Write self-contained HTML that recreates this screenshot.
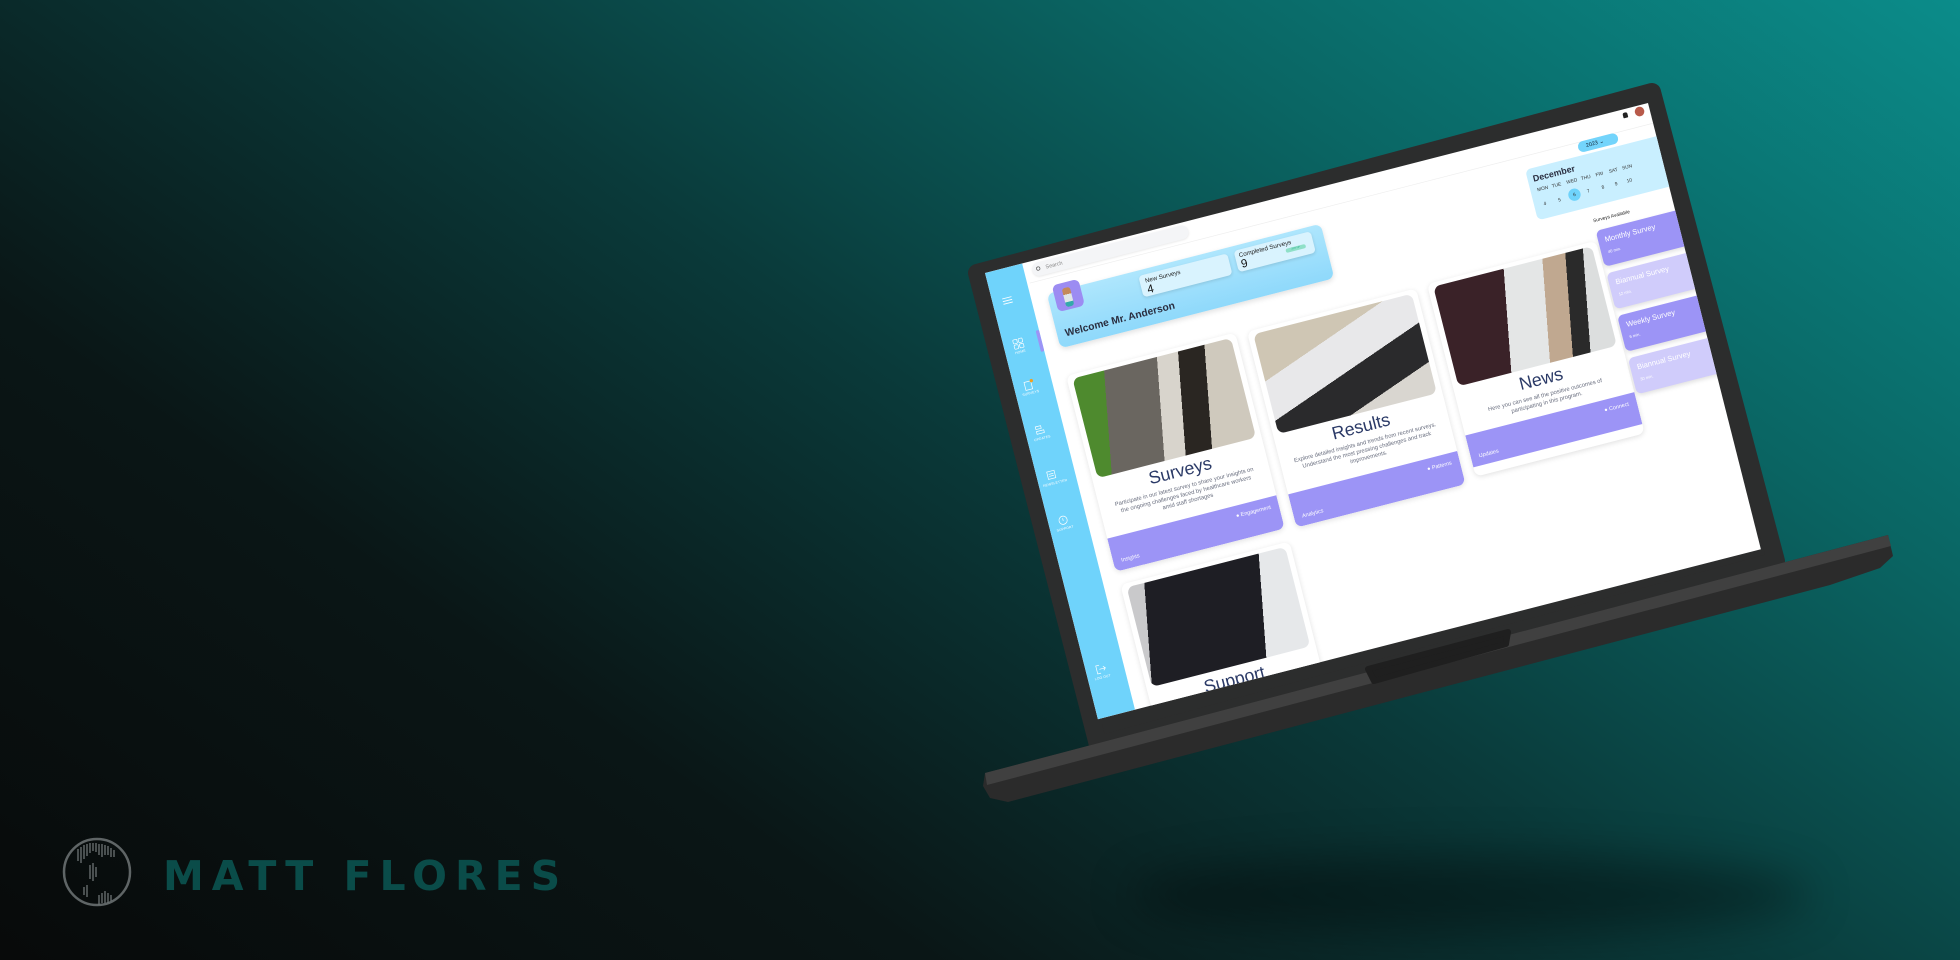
<!DOCTYPE html>
<html><head><meta charset="utf-8"><style>
*{margin:0;padding:0;box-sizing:border-box}
body{width:1960px;height:960px;overflow:hidden;position:relative;font-family:"Liberation Sans",sans-serif;
background:linear-gradient(35deg,#080a0a 0%,#0a1616 28%,#0a3a3a 52%,#0a6563 75%,#0b8c8a 100%);}
.abs{position:absolute}
#screen{position:absolute;left:0;top:0;width:1000px;height:672px;transform-origin:0 0;transform:matrix(0.663,-0.170,0.168,0.664,985,273);background:#fff;overflow:hidden}
.side{position:absolute;left:0;top:0;width:56px;height:672px;background:#6fd3fb}
.ico{position:absolute;left:6px;width:32px;text-align:center;color:#fff;font-size:5px;letter-spacing:.2px}
.ico svg{display:block;margin:0 auto 2px}
.card{position:absolute;width:255px;height:295px;background:#fff;border-radius:10px;box-shadow:0 2px 8px rgba(0,0,0,.12);overflow:hidden}
.ph{position:absolute;left:8px;top:6px;right:8px;height:150px;border-radius:10px}
.ct{position:absolute;left:0;right:0;top:160px;text-align:center;color:#2b3a67;font-size:26px}
.cd{position:absolute;left:20px;right:20px;top:194px;text-align:center;color:#6b7080;font-size:8.5px;line-height:11px}
.cf{position:absolute;left:0;right:0;bottom:0;height:50px;background:#9c94f6;color:#fff;font-size:8px}
.cf .l{position:absolute;left:12px;bottom:10px}
.cf .r{position:absolute;right:12px;top:10px}
.sv{position:absolute;left:880px;width:130px;height:54px;border-radius:8px;color:#fff;box-shadow:0 3px 6px rgba(0,0,0,.12)}
.sv b{position:absolute;left:10px;top:10px;font-size:11px;font-weight:normal}
.sv i{position:absolute;left:10px;top:32px;font-size:6px;font-style:normal}
.cal span{position:absolute;font-size:7px;color:#333}
</style></head><body>

<div class="abs" style="left:1130px;top:855px;width:680px;height:80px;border-radius:50%;background:rgba(0,0,0,.35);filter:blur(22px)"></div>

<svg class="abs" style="left:0;top:0" width="1960" height="960">
<polygon points="977,273 1652,92 1776,561 1098,745" fill="#2c2d2d" stroke="#2c2d2d" stroke-width="18" stroke-linejoin="round"/>
</svg>

<div id="screen">
 <div class="side">
  <div class="ico" style="top:40px"><svg width="16" height="14"><path d="M1 3h14M1 7h14M1 11h14" stroke="#fff" stroke-width="1.3"/></svg></div>
  <div class="ico" style="top:104px"><svg width="16" height="16"><rect x="1" y="1" width="6" height="6" rx="1.5" fill="none" stroke="#fff"/><rect x="9" y="1" width="6" height="6" rx="1.5" fill="none" stroke="#fff"/><rect x="1" y="9" width="6" height="6" rx="1.5" fill="none" stroke="#fff"/><rect x="9" y="9" width="6" height="6" rx="1.5" fill="none" stroke="#fff"/></svg>HOME</div>
  <div class="ico" style="top:166px"><svg width="16" height="16"><rect x="2" y="3" width="10" height="12" fill="none" stroke="#fff"/><circle cx="13" cy="3" r="2.5" fill="#f0a020"/></svg>SURVEYS</div>
  <div class="ico" style="top:234px"><svg width="16" height="16"><path d="M2 2h8v4H2zM2 9h11v4H2z" fill="none" stroke="#fff"/></svg>UPDATES</div>
  <div class="ico" style="top:302px"><svg width="16" height="16"><rect x="2" y="2" width="11" height="11" fill="none" stroke="#fff"/><path d="M4 6h7M4 9h7" stroke="#fff"/></svg>NEWSLETTER</div>
  <div class="ico" style="top:370px"><svg width="16" height="16"><circle cx="8" cy="8" r="6" fill="none" stroke="#fff"/><path d="M8 5v4" stroke="#fff"/></svg>SUPPORT</div>
  <div class="ico" style="top:594px"><svg width="16" height="16"><path d="M7 2H2v12h5M6 8h9M12 5l3 3-3 3" fill="none" stroke="#fff"/></svg>LOG OUT</div>
 </div>
 <div class="abs" style="left:51px;top:100px;width:5px;height:32px;background:#9c94f6;border-radius:2px"></div>
 <div class="abs" style="left:68px;top:4px;width:235px;height:20px;border-radius:10px;background:#f4f5f7;box-shadow:0 1px 3px rgba(0,0,0,.1);font-size:8px;color:#888;padding:5px 0 0 20px">Search</div>
 <div class="abs" style="left:74px;top:10px;width:6px;height:6px;border:1px solid #555;border-radius:50%"></div>
 <div class="abs" style="left:60px;top:30px;width:940px;height:1px;background:#eee"></div>
 <div class="abs" style="left:960px;top:5px;width:7px;height:8px;background:#222;border-radius:3px 3px 1px 1px"></div>
 <div class="abs" style="left:978px;top:2px;width:14px;height:14px;border-radius:50%;background:#b85a4a"></div>

 <div class="abs" style="left:80px;top:52px;width:413px;height:82px;border-radius:10px;background:linear-gradient(180deg,#aee6fd,#8fd9fb);box-shadow:0 3px 8px rgba(0,0,0,.12)"></div>
 <div class="abs" style="left:90px;top:42px;width:40px;height:40px;border-radius:8px;background:#9c8cf2"></div>
 <div class="abs" style="left:103px;top:50px;width:12px;height:28px;background:linear-gradient(#c48a5a 0 35%,#dfe6e6 35% 75%,#3aa 75%);border-radius:4px"></div>
 <div class="abs" style="left:92px;top:106px;font-size:15px;font-weight:bold;color:#2a2e40">Welcome Mr. Anderson</div>
 <div class="abs" style="left:216px;top:60px;width:134px;height:32px;border-radius:6px;background:#d9f3fe;box-shadow:0 2px 5px rgba(0,0,0,.12)">
  <div class="abs" style="left:8px;top:4px;font-size:9px;color:#222">New Surveys</div>
  <div class="abs" style="left:8px;top:13px;font-size:17px;color:#111">4</div></div>
 <div class="abs" style="left:360px;top:59px;width:116px;height:32px;border-radius:6px;background:#d9f3fe;box-shadow:0 2px 5px rgba(0,0,0,.12)">
  <div class="abs" style="left:6px;top:3px;font-size:9px;color:#222">Completed Surveys</div>
  <div class="abs" style="left:6px;top:12px;font-size:17px;color:#111">9</div>
  <div class="abs" style="left:74px;top:16px;width:30px;height:6px;border-radius:3px;background:#8fe0c8;font-size:3.5px;color:#2a8;text-align:center">20% UP</div></div>

 <div class="card" style="left:78px;top:175px">
  <div class="ph" style="background:linear-gradient(100deg,#4e8a2e 0 18%,#6a6660 18% 48%,#d8d4cc 48% 60%,#2a2622 60% 75%,#cfc9bd 75%)"></div>
  <div class="ct">Surveys</div>
  <div class="cd">Participate in our latest survey to share your insights on the ongoing challenges faced by healthcare workers amid staff shortages</div>
  <div class="cf"><span class="r">● Engagement</span><span class="l">Insights</span></div></div>
 <div class="card" style="left:350px;top:178px">
  <div class="ph" style="background:linear-gradient(160deg,#cfc6b4 0 30%,#e8e8ea 30% 55%,#2a2a2c 55% 80%,#d9d6d0 80%)"></div>
  <div class="ct">Results</div>
  <div class="cd">Explore detailed insights and trends from recent surveys. Understand the most pressing challenges and track improvements.</div>
  <div class="cf"><span class="r">● Patterns</span><span class="l">Analytics</span></div></div>
 <div class="card" style="left:622px;top:176px;height:290px">
  <div class="ph" style="background:linear-gradient(100deg,#3a2228 0 40%,#e4e6e6 40% 62%,#c0a890 62% 75%,#2a2a2a 75% 85%,#dcdede 85%)"></div>
  <div class="ct">News</div>
  <div class="cd">Here you can see all the positive outcomes of participating in this program.</div>
  <div class="cf" style="top:228px;bottom:auto;height:48px"><span class="r">● Connect</span><span class="l">Updates</span></div></div>
 <div class="card" style="left:80px;top:490px">
  <div class="ph" style="background:linear-gradient(100deg,#c9c9cb 0 10%,#1e1e24 10% 75%,#e6e8ea 75%)"></div>
  <div class="ct">Support</div></div>

 <div class="abs" style="left:885px;top:30px;width:60px;height:16px;border-radius:8px;background:#73d4fb;font-size:8px;color:#123;padding:3px 0 0 12px">2023 ⌄</div>
 <div class="abs cal" style="left:802px;top:50px;width:210px;height:76px;border-radius:8px;background:#c9efff">
  <div class="abs" style="left:8px;top:8px;font-size:13px;font-weight:bold;color:#2a2e40">December</div>
  <span style="left:10px;top:30px">MON</span><span style="left:32px;top:30px">TUE</span><span style="left:54px;top:30px">WED</span><span style="left:76px;top:30px">THU</span><span style="left:98px;top:30px">FRI</span><span style="left:118px;top:30px">SAT</span><span style="left:138px;top:30px">SUN</span>
  <span style="left:14px;top:52px">4</span><span style="left:36px;top:52px">5</span>
  <div class="abs" style="left:52px;top:44px;width:18px;height:18px;border-radius:50%;background:#6fd3fb"></div>
  <span style="left:59px;top:50px">6</span><span style="left:80px;top:50px">7</span><span style="left:102px;top:50px">8</span><span style="left:122px;top:50px">9</span><span style="left:140px;top:50px">10</span></div>
 <div class="abs" style="left:880px;top:144px;font-size:7px;color:#222">Surveys Available</div>
 <div class="sv" style="top:162px;background:#9c94f6"><b>Monthly Survey</b><i>40 min.</i></div>
 <div class="sv" style="top:226px;background:#d0ccfb"><b>Biannual Survey</b><i>12 min.</i></div>
 <div class="sv" style="top:290px;background:#9c94f6"><b>Weekly Survey</b><i>6 min.</i></div>
 <div class="sv" style="top:354px;background:#d0ccfb"><b>Biannual Survey</b><i>30 min.</i></div>
</div>

<svg class="abs" style="left:0;top:0" width="1960" height="960">
<polygon points="985,773 1888,535 1893,556 1880,568 1830,585 1008,802 990,798 983,786" fill="#2b2b2b"/>
<polygon points="985,773 1888,535 1891,546 987,785" fill="#404040"/>
<polygon points="1368,669 1508,632 1506,644 1374,681" fill="#1f1f1f" stroke="#1f1f1f" stroke-width="6" stroke-linejoin="round"/>
</svg>

<svg class="abs" style="left:60px;top:835px" width="76" height="76">
<circle cx="37" cy="37" r="33" fill="none" stroke="#5f6566" stroke-width="2.5"/>
<g stroke="#6d7374" stroke-width="1.3">
<path d="M18 14v12M21 12v16M24 10v14M27 9v12M30 8v10M33 8v8M36 8v9M39 9v11M42 9v13M45 10v10M48 11v9M51 13v9M54 15v7"/>
<path d="M30 30v14M33 28v18M36 32v10M27 50v12M24 52v8M42 58v10M45 56v12M48 58v10M51 60v6M39 60v10"/>
</g></svg>
<div class="abs" style="left:163px;top:852px;font-size:41px;font-weight:bold;letter-spacing:8px;color:#0a4c49;font-family:'DejaVu Sans','Liberation Sans',sans-serif;white-space:nowrap">MATT FLORES</div>
</body></html>
